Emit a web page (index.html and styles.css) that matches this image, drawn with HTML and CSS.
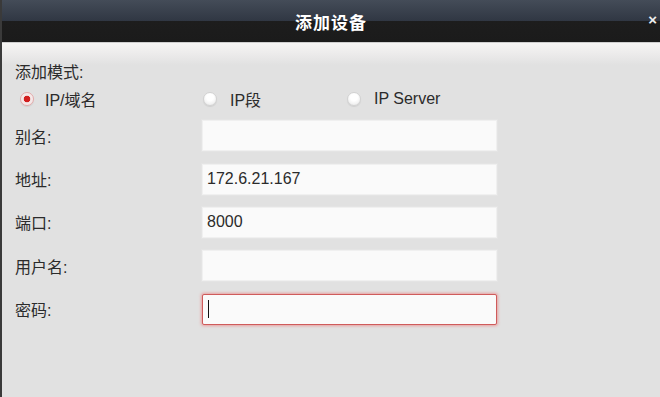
FILE: index.html
```html
<!DOCTYPE html>
<html lang="zh-CN">
<head>
    <meta charset="UTF-8">
    <meta name="viewport" content="width=device-width, initial-scale=1.0">
    <link rel="stylesheet" href="styles.css">
    <title>添加设备</title>
</head>
<body>
    <div class="dialog">
        <div class="titlebar">
            <span class="title">添加设备</span>
            <span class="close">×</span>
        </div>
        <div class="content">
            <div class="mode-label">添加模式:</div>
            <div class="modes">
                <label class="mode mode1"><span class="radio checked"></span>IP/域名</label>
                <label class="mode mode2"><span class="radio"></span>IP段</label>
                <label class="mode mode3"><span class="radio"></span>IP Server</label>
            </div>
            <div class="row">
                <span class="label">别名:</span>
                <div class="field"></div>
            </div>
            <div class="row">
                <span class="label">地址:</span>
                <div class="field">172.6.21.167</div>
            </div>
            <div class="row">
                <span class="label">端口:</span>
                <div class="field">8000</div>
            </div>
            <div class="row">
                <span class="label">用户名:</span>
                <div class="field"></div>
            </div>
            <div class="row">
                <span class="label">密码:</span>
                <div class="field error"><span class="caret"></span></div>
            </div>
        </div>
    </div>
</body>
</html>
```

FILE: styles.css
```css
body{
    margin: 0px;
    font-family: "Liberation Sans", "Noto Sans CJK SC", sans-serif;
    font-size: 16px;
    color: #2b2b2b;
    background: #e1e1e1;
}
.dialog{
    width: 660px;
    height: 397px;
    box-sizing: border-box;
    border-left: 2px solid #3a3a3a;
    background: #e1e1e1;
    display: flex;
    flex-direction: column;
}
.titlebar{
    height: 42px;
    flex: none;
    position: relative;
    display: flex;
    align-items: center;
    justify-content: center;
    background: linear-gradient(to bottom, #444c58 0%, #303743 50%, #1d1d1d 50%, #1b1b1b 100%);
}
.title{
    color: #fff;
    font-weight: bold;
    font-size: 17px;
    letter-spacing: 1px;
}
.close{
    position: absolute;
    right: 3px;
    top: 11px;
    color: #eee;
    font-weight: bold;
    font-size: 15px;
}
.content{
    flex: 1;
    padding: 20px 0px 0px 13px;
    background: linear-gradient(to bottom, #f6f5f4 0px, #ebeaea 12px, #e1e1e1 22px);
    border-top: 1px solid #cfcfcf;
}
.mode-label{
    height: 20px;
    line-height: 20px;
}
.modes{
    display: flex;
    height: 22px;
    align-items: center;
    margin: 5px 0px 4px;
}
.mode{
    display: flex;
    align-items: center;
    gap: 11px;
}
.mode1{ width: 183px; padding-left: 5px; }
.mode2{ width: 144px; gap: 13px; }
.mode3{ gap: 13px; }
.radio{
    width: 14px;
    height: 14px;
    border-radius: 50%;
    box-sizing: border-box;
    border: 1px solid #d2d2d2;
    background: radial-gradient(circle at 50% 35%, #ffffff 35%, #e6e6e6 100%);
    box-shadow: 0 1px 1px rgba(0,0,0,0.08);
}
.radio.checked{
    border-color: #e3a9a9;
    background: radial-gradient(circle, #d21f1f 0px, #d21f1f 3px, #f3e4e4 3.6px, #fbf5f5 100%);
}
.row{
    display: flex;
    align-items: center;
    height: 43.4px;
}
.label{
    width: 187px;
}
.field{
    width: 295px;
    height: 31px;
    box-sizing: border-box;
    background: #fafafa;
    border: 1px solid #f0f0f0;
    box-shadow: 0 0 0 1px #e4e4e4;
    padding-left: 4px;
    display: flex;
    align-items: center;
}
.field.error{
    border: 1px solid #cf5b5b;
    border-radius: 2px;
    box-shadow: 0 0 3px 1px #e9a0a0;
}
.caret{
    width: 1px;
    height: 18px;
    background: #111;
    margin-left: 1px;
}
```
